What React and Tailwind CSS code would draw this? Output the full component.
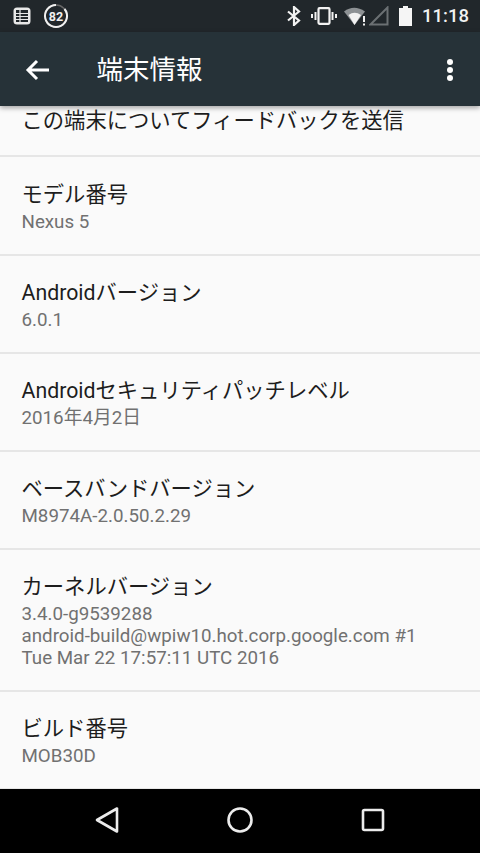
const rows = [
  { t: "モデル番号", s: ["Nexus 5"] },
  { t: "Androidバージョン", s: ["6.0.1"] },
  { t: "Androidセキュリティパッチレベル", s: ["2016年4月2日"] },
  { t: "ベースバンドバージョン", s: ["M8974A-2.0.50.2.29"] },
  { t: "カーネルバージョン", s: ["3.4.0-g9539288", "android-build@wpiw10.hot.corp.google.com #1", "Tue Mar 22 17:57:11 UTC 2016"] },
  { t: "ビルド番号", s: ["MOB30D"] },
];

const font = "font-['Roboto','Noto_Sans_CJK_JP',sans-serif]";

function StatusLeft() {
  return (
    <div className="flex items-center gap-[13px] ml-[13px]">
      <svg width="18" height="18" viewBox="0 0 18 18">
        <rect x="0.500" y="0.500" width="17" height="17" rx="3.500" fill="#e8e8e8" />
        <rect x="3" y="3" width="12" height="12" fill="#21272b" />
        <path d="M3 6.500h12M3 9.500h12M3 12.500h12M7 3v12" stroke="#e8e8e8" strokeWidth="1.200" />
      </svg>
      <svg width="24" height="24" viewBox="0 0 24 24" className="overflow-visible">
        <circle cx="12" cy="12" r="11" fill="none" stroke="#666" strokeWidth="1.500" />
        <path d="M12 1a11 11 0 1 0 8.500 4" fill="none" stroke="#f0f0f0" strokeWidth="2" />
        <text x="12" y="16.500" textAnchor="middle" fontSize="12.500" fontWeight="700" fill="#f0f0f0" fontFamily="Roboto, sans-serif">82</text>
      </svg>
    </div>
  );
}

function StatusRight() {
  return (
    <div className="flex items-center mr-[11px]">
      <svg width="16" height="20" viewBox="0 0 16 20" className="mr-[9px]">
        <path d="M2 5.500l11 9L8 19V1l5 4.500-11 9" fill="none" stroke="#f2f2f2" strokeWidth="2.200" />
      </svg>
      <svg width="26" height="18" viewBox="0 0 26 18" className="mr-[7px]">
        <rect x="7.500" y="1.200" width="11" height="15.600" rx="1" fill="none" stroke="#f2f2f2" strokeWidth="2.200" />
        <path d="M4.500 5v8M1 7v4M21.500 5v8M25 7v4" stroke="#f2f2f2" strokeWidth="2" />
      </svg>
      <svg width="24" height="20" viewBox="0 0 24 20">
        <path d="M0 5.500Q10-2 21 5.500L10.500 19Z" fill="#8d9194" />
        <path d="M4.500 9Q10.500 4.500 17 9L10.500 19Z" fill="#f2f2f2" />
        <path d="M20 10v6M20 17.500v2" stroke="#f2f2f2" strokeWidth="2" />
      </svg>
      <svg width="20" height="20" viewBox="0 0 20 20" className="ml-[1px] mr-[9px]">
        <path d="M1.500 18.500L18.500 1.500V18.500Z" fill="none" stroke="#6b7073" strokeWidth="2" />
      </svg>
      <svg width="15" height="20" viewBox="0 0 15 20" className="mr-[9px]">
        <path d="M5 0h5v2h4v18H1V2h4Z" fill="#f5f5f5" />
      </svg>
      <span className={`${font} text-[18.500px] font-medium text-[#f2f2f2] leading-none`}>11:18</span>
    </div>
  );
}

function Row({ t, s }) {
  return (
    <div className="border-b-2 border-[#e6e6e6] pl-[21.500px] pt-[22px] pb-[21px]">
      <div className="text-[21.300px] leading-[30px] text-[#1d1d1d]">{t}</div>
      <div className="mt-[1px] text-[18.750px] leading-[22px] text-[#717171]">
        {s.map((x) => (
          <div key={x}>{x}</div>
        ))}
      </div>
    </div>
  );
}

export default function App() {
  return (
    <div className={`${font} w-[480px] h-[853px] flex flex-col overflow-hidden bg-[#fafafa]`}>
      <div className="h-[32px] shrink-0 bg-[#21272b] flex items-center justify-between">
        <StatusLeft />
        <StatusRight />
      </div>
      <div className="h-[74px] shrink-0 bg-[#263238] flex items-center pt-[2px] relative z-10 shadow-[0_2px_5px_rgba(0,0,0,0.35)]">
        <svg width="26" height="24" viewBox="0 0 26 24" className="ml-[25px]">
          <path d="M24 12H3M12 3l-9 9 9 9" fill="none" stroke="#fff" strokeWidth="3" />
        </svg>
        <div className="ml-[45.500px] text-[26.500px] text-white leading-none">端末情報</div>
        <svg width="8" height="24" viewBox="0 0 8 24" className="ml-auto mr-[26px]">
          <circle cx="4" cy="4" r="3" fill="#fff" />
          <circle cx="4" cy="12" r="3" fill="#fff" />
          <circle cx="4" cy="20" r="3" fill="#fff" />
        </svg>
      </div>
      <div className="flex-1 min-h-0 overflow-hidden">
        <div className="h-[51px] border-b-2 border-[#e6e6e6] pl-[21.500px] flex items-end pb-[19px]">
          <div className="text-[21.300px] leading-[30px] text-[#1d1d1d]">この端末についてフィードバックを送信</div>
        </div>
        <div className="pt-[1px]">
          {rows.map((r) => (
            <Row key={r.t} {...r} />
          ))}
        </div>
      </div>
      <div className="h-[64px] shrink-0 bg-black flex items-center pb-[2px]">
        <svg width="26" height="28" viewBox="0 0 26 28" className="ml-[94px]">
          <path d="M23 2.500V25.500L3 14Z" fill="none" stroke="#ececec" strokeWidth="2.600" strokeLinejoin="round" />
        </svg>
        <svg width="28" height="28" viewBox="0 0 28 28" className="ml-[106px]">
          <circle cx="14" cy="14" r="11.500" fill="none" stroke="#ececec" strokeWidth="2.600" />
        </svg>
        <svg width="24" height="24" viewBox="0 0 24 24" className="ml-[107px]">
          <rect x="2" y="2" width="20" height="20" rx="1.500" fill="none" stroke="#ececec" strokeWidth="2.600" />
        </svg>
      </div>
    </div>
  );
}
